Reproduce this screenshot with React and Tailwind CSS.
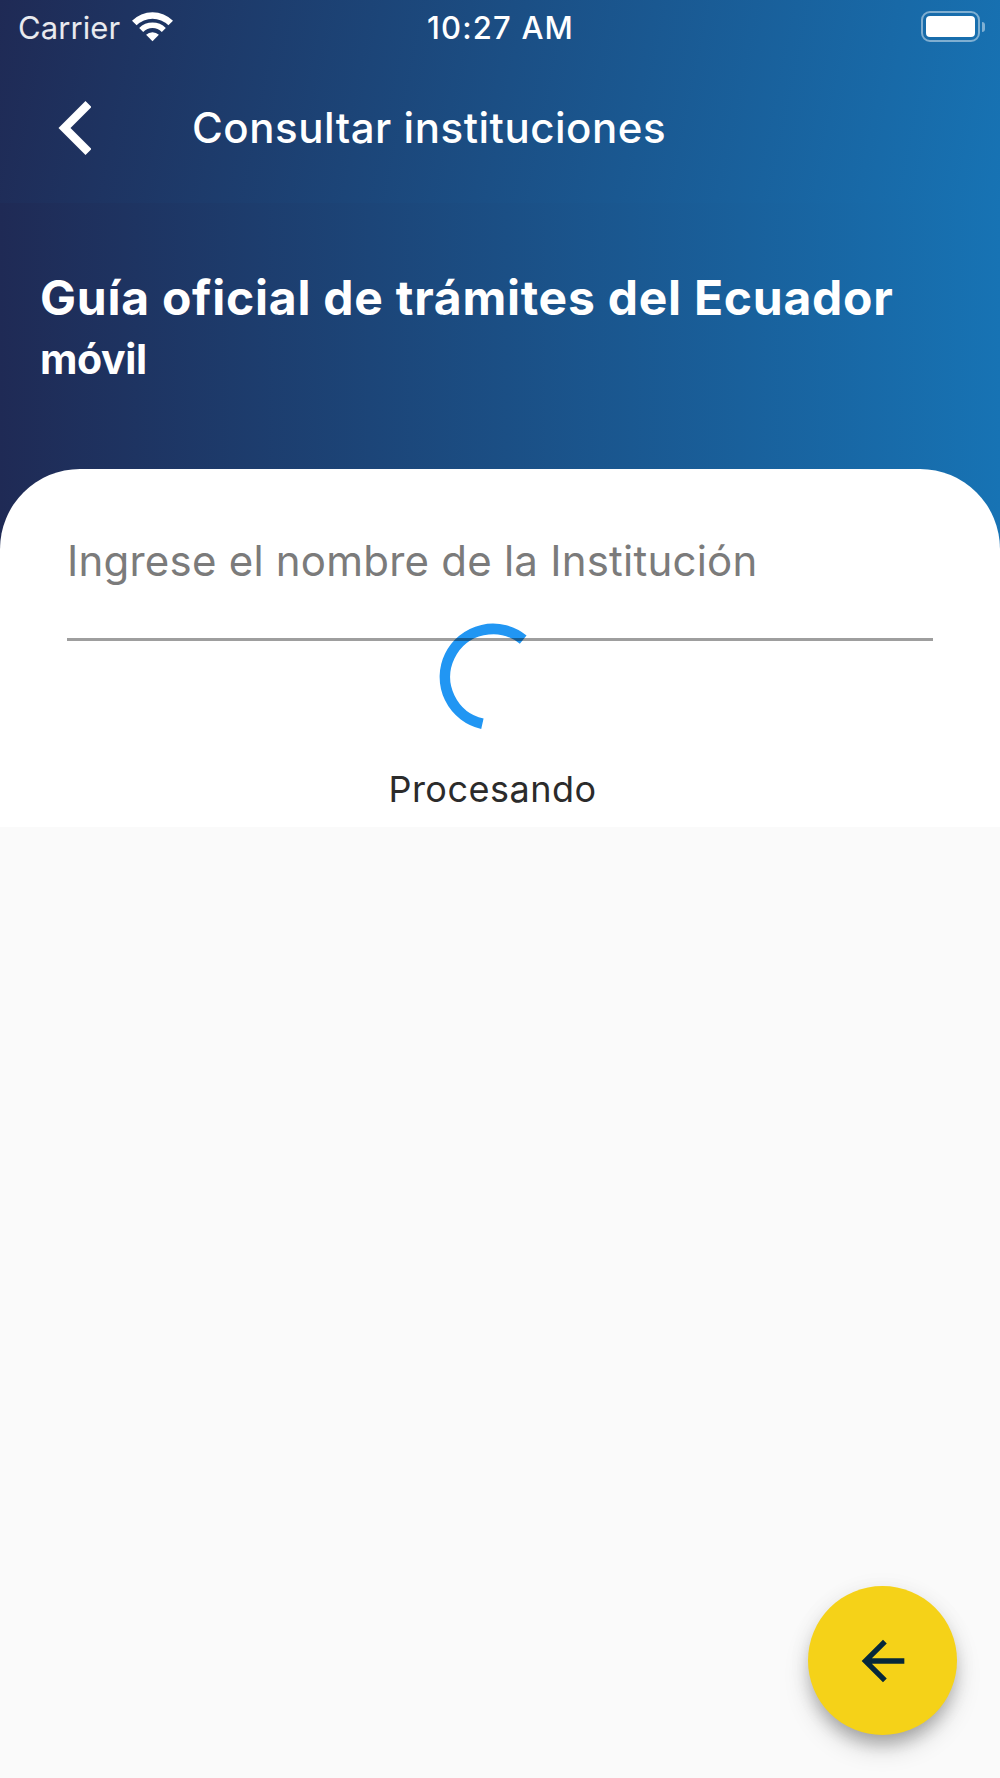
import { useState } from 'react';

function WifiIcon() {
  return (
    <svg className="ml-[12px] w-[41px] h-[31px]" viewBox="0 0 41 31" fill="white">
      <path d="M0 9.7A29 29 0 0 1 41 9.7L36.4 14.3A22.5 22.5 0 0 0 4.6 14.3Z" />
      <path d="M7.2 16.9A18.8 18.8 0 0 1 33.8 16.9L29.8 20.9A13.2 13.2 0 0 0 11.2 20.9Z" />
      <path d="M14.1 23.8A9.1 9.1 0 0 1 26.9 23.8L20.5 30.2Z" />
    </svg>
  );
}

function Battery() {
  return (
    <div className="flex items-center gap-[2px]">
      <div className="w-[59px] h-[31px] rounded-[9px] border-2 border-white/45 p-[3px]">
        <div className="w-full h-full rounded-[4px] bg-white" />
      </div>
      <div className="w-[3px] h-[10px] rounded-r-full bg-white/45" />
    </div>
  );
}

function StatusBar() {
  return (
    <div className="grid grid-cols-3 items-center h-14 pl-[18px] pr-[15px] pb-[3px] text-[31px] leading-none">
      <div className="flex items-center">
        <span className="mt-[2px] tracking-[0.1px] text-white/90">Carrier</span>
        <WifiIcon />
      </div>
      <span className="mt-[2px] mr-[2px] text-center font-medium tracking-[1.2px] whitespace-nowrap">10:27 AM</span>
      <div className="flex justify-end">
        <Battery />
      </div>
    </div>
  );
}

function AppBar() {
  return (
    <div className="flex items-center h-36 pl-[58px]">
      <button aria-label="Volver">
        <svg className="w-[33px] h-[54px]" viewBox="0 0 33 54" fill="white">
          <path d="M27.5 0L0.5 27L27.5 54L33.5 48L12.5 27L33.5 6Z" />
        </svg>
      </button>
      <h1 className="ml-[101px] text-[42px] font-medium leading-[50px] tracking-[0.53px] whitespace-nowrap">
        Consultar instituciones
      </h1>
    </div>
  );
}

function Spinner() {
  return (
    <svg className="w-[108px] h-[108px]" viewBox="0 0 108 108" fill="none">
      <path d="M84.2 16.7A48 48 0 1 0 43.4 100.8" stroke="#2196f3" strokeWidth="10.67" />
    </svg>
  );
}

function App() {
  const [query, setQuery] = useState('');

  return (
    <div className="relative w-[1000px] h-[1778px] overflow-hidden bg-[#fafafa] font-['Inter',sans-serif] text-white">
      <header className="h-[203px] bg-[linear-gradient(101.5deg,#1f2a55,#1773b4)]">
        <StatusBar />
        <AppBar />
      </header>

      <main className="h-[624px] bg-[linear-gradient(90deg,#1f2a55,#1773b4)]">
        <div className="h-[266px] pl-[40px] pt-[67px] font-bold whitespace-nowrap">
          <h2 className="text-[48px] leading-[56px] tracking-[0.75px]">Guía oficial de trámites del Ecuador</h2>
          <p className="mt-[8px] text-[41px] leading-[50px] tracking-[-0.4px]">móvil</p>
        </div>

        <div className="h-[358px] rounded-t-[80px] bg-white px-[67px] pt-[41px]">
          <div className="relative z-10 h-[131px] border-b-[3px] border-black/38">
            <input
              className="w-full h-[100px] bg-transparent text-[42px] tracking-[0.22px] text-gray-800 outline-none placeholder:text-[#7b7b7b]"
              placeholder="Ingrese el nombre de la Institución"
              value={query}
              onChange={(e) => setQuery(e.target.value)}
            />
          </div>
          <div className="-mt-[18px] mr-[15px] flex flex-col items-center">
            <Spinner />
            <p className="mt-[33px] text-[36px] leading-[50px] tracking-[0.5px] text-[#2b2b2b]">Procesando</p>
          </div>
        </div>
      </main>

      <button
        aria-label="Regresar"
        className="absolute right-[43px] bottom-[43px] flex items-center justify-center w-[149px] h-[149px] rounded-full bg-[#f5d218] shadow-[0_12px_16px_-4px_rgba(0,0,0,0.2),0_14px_27px_-2px_rgba(0,0,0,0.18),0_3px_24px_0_rgba(0,0,0,0.05)]"
      >
        <svg className="w-16 h-16" viewBox="0 0 24 24" fill="#06283a">
          <path d="M20 11H7.83l5.59-5.59L12 4l-8 8 8 8 1.41-1.41L7.83 13H20v-2z" />
        </svg>
      </button>
    </div>
  );
}

export default App;
